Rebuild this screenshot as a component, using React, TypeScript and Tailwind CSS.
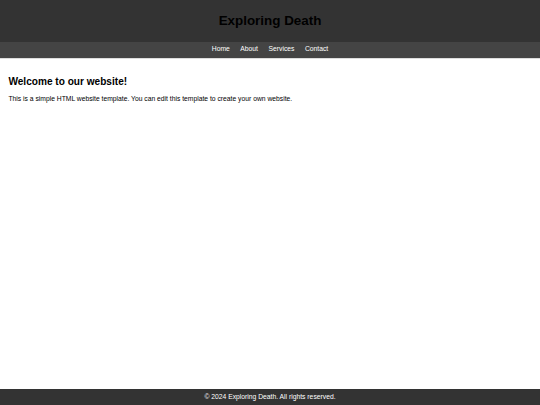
export default function App() {
  return (
    <div className="min-h-screen flex flex-col bg-white" style={{ fontFamily: '"Liberation Sans", Arial, sans-serif' }}>
      <header className="bg-[#333333] h-[42px] flex items-center justify-center">
        <h1 className="text-[13.4px] font-bold text-black leading-none">Exploring Death</h1>
      </header>
      <nav className="bg-[#444444] h-[16.5px] flex items-center justify-center gap-[10.5px] border-b border-[#dddddd]">
        <a className="text-white text-[6.75px] leading-none">Home</a>
        <a className="text-white text-[6.75px] leading-none">About</a>
        <a className="text-white text-[6.75px] leading-none">Services</a>
        <a className="text-white text-[6.75px] leading-none">Contact</a>
      </nav>
      <main className="flex-1 px-[8.4px] pt-[18px]">
        <h2 className="text-[10.1px] font-bold text-black leading-none">Welcome to our website!</h2>
        <p className="text-[6.75px] text-black leading-none mt-[9.5px]">This is a simple HTML website template. You can edit this template to create your own website.</p>
      </main>
      <footer className="bg-[#333333] h-[16px] flex items-center justify-center">
        <p className="text-white text-[6.75px] leading-none">© 2024 Exploring Death. All rights reserved.</p>
      </footer>
    </div>
  );
}
